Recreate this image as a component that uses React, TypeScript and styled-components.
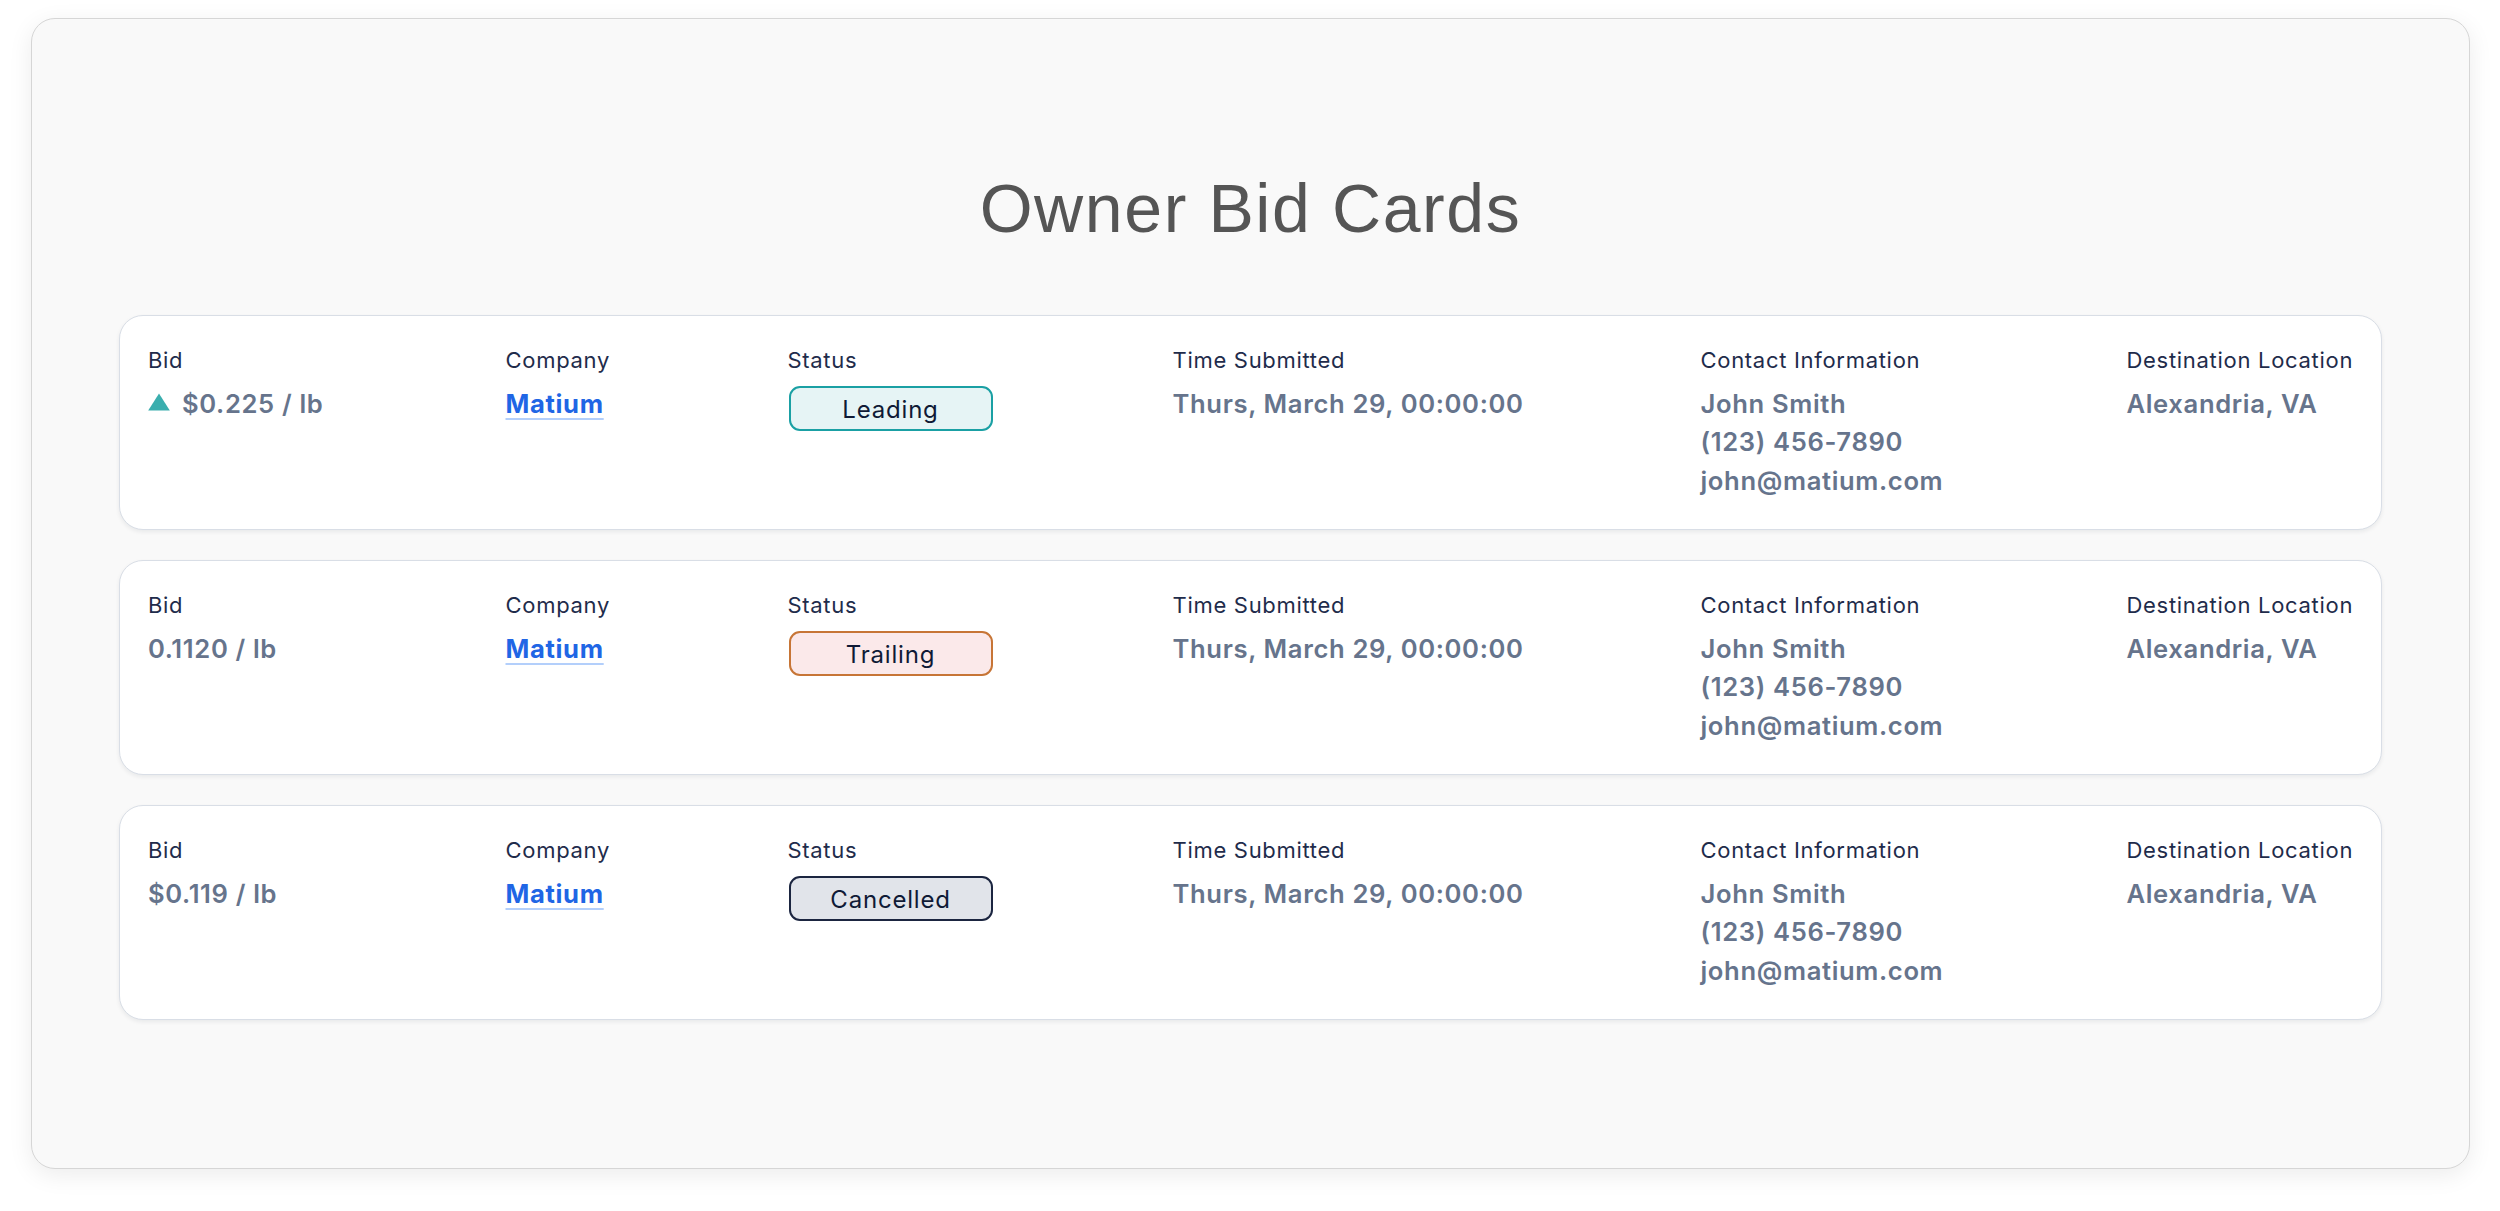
import React from "react";
import styled, { createGlobalStyle } from "styled-components";

const GlobalStyle = createGlobalStyle`
  html, body {
    margin: 0;
    padding: 0;
    background: #ffffff;
  }
  body {
    font-family: Inter, "Noto Sans", "Liberation Sans", sans-serif;
  }
`;

const Page = styled.div`
  padding: 18px 30px 40px 31px;
`;

const Panel = styled.section`
  background: #f9f9f9;
  border: 1px solid #d6d6d6;
  border-radius: 24px;
  box-shadow: 0 6px 24px rgba(0, 0, 0, 0.08);
  padding: 150px 87px 148px;
  display: flex;
  flex-direction: column;
`;

const Title = styled.h1`
  margin: 0 0 68px;
  font-family: "Liberation Sans", Arial, sans-serif;
  font-weight: 400;
  font-size: 68px;
  line-height: 78px;
  letter-spacing: 1.6px;
  color: #555555;
  text-align: center;
`;

const CardList = styled.div`
  display: flex;
  flex-direction: column;
  gap: 30px;
`;

const Card = styled.article`
  background: #ffffff;
  border: 1px solid #d9dee6;
  border-radius: 24px;
  box-shadow: 0 2px 4px rgba(15, 23, 42, 0.07);
  height: 215px;
  box-sizing: border-box;
  padding: 28px 31px 28px 28px;
  display: grid;
  grid-template-columns: 357.5px 282px 385px 528px 426px 1fr;
  align-items: start;
`;

const Field = styled.div`
  display: flex;
  flex-direction: column;
  align-items: flex-start;
`;

const Label = styled.div`
  font-size: 22px;
  line-height: 33px;
  font-weight: 400;
  letter-spacing: 0.7px;
  color: #1f2c4b;
  white-space: nowrap;
`;

const Value = styled.div`
  margin-top: 8px;
  font-size: 25.6px;
  line-height: 38.4px;
  font-weight: 600;
  letter-spacing: 0.65px;
  color: #66748c;
  white-space: nowrap;
  display: flex;
  flex-direction: column;
  align-items: flex-start;
`;

const BidLine = styled.span`
  display: inline-flex;
  align-items: center;
  gap: 12px;
`;

const Arrow = styled.svg`
  width: 22px;
  height: 18px;
  flex: none;
  margin-top: -5px;
`;

const CompanyLink = styled.a`
  color: #1f66e5;
  font-weight: 700;
  text-decoration: underline;
  text-decoration-color: #b3cffb;
  text-decoration-thickness: 1.5px;
  text-underline-offset: 5px;
`;

type Tone = "leading" | "trailing" | "cancelled";

const toneStyles: Record<Tone, { border: string; bg: string }> = {
  leading: { border: "#1aa0a4", bg: "#e6f4f5" },
  trailing: { border: "#c77536", bg: "#fbe9ea" },
  cancelled: { border: "#1b2540", bg: "#e1e4ea" },
};

const Badge = styled.div<{ $tone: Tone }>`
  margin: 9px 0 0 1px;
  width: 204px;
  height: 45px;
  box-sizing: border-box;
  border-radius: 11px;
  border: 2px solid ${(p) => toneStyles[p.$tone].border};
  background: ${(p) => toneStyles[p.$tone].bg};
  display: flex;
  align-items: center;
  justify-content: center;
  font-size: 24px;
  font-weight: 400;
  letter-spacing: 0.8px;
  color: #0f1a36;
  padding-top: 2px;
`;

type Bid = {
  bid: string;
  up?: boolean;
  status: Tone;
  statusText: string;
};

const bids: Bid[] = [
  { bid: "$0.225 / lb", up: true, status: "leading", statusText: "Leading" },
  { bid: "0.1120 / lb", status: "trailing", statusText: "Trailing" },
  { bid: "$0.119 / lb", status: "cancelled", statusText: "Cancelled" },
];

const UpArrow = () => (
  <Arrow viewBox="0 0 22 18">
    <path d="M11 0.5 L21.8 17.5 L0.2 17.5 Z" fill="#3aaeae" />
  </Arrow>
);

export default function App() {
  return (
    <>
      <GlobalStyle />
      <Page>
        <Panel>
          <Title>Owner Bid Cards</Title>
          <CardList>
            {bids.map((b, i) => (
              <Card key={i}>
                <Field>
                  <Label>Bid</Label>
                  <Value>
                    <BidLine>
                      {b.up && <UpArrow />}
                      {b.bid}
                    </BidLine>
                  </Value>
                </Field>
                <Field>
                  <Label>Company</Label>
                  <Value>
                    <CompanyLink href="#">Matium</CompanyLink>
                  </Value>
                </Field>
                <Field>
                  <Label>Status</Label>
                  <Badge $tone={b.status}>{b.statusText}</Badge>
                </Field>
                <Field>
                  <Label>Time Submitted</Label>
                  <Value>Thurs, March 29, 00:00:00</Value>
                </Field>
                <Field>
                  <Label>Contact Information</Label>
                  <Value>
                    <span>John Smith</span>
                    <span>(123) 456-7890</span>
                    <span>john@matium.com</span>
                  </Value>
                </Field>
                <Field>
                  <Label>Destination Location</Label>
                  <Value>Alexandria, VA</Value>
                </Field>
              </Card>
            ))}
          </CardList>
        </Panel>
      </Page>
    </>
  );
}
